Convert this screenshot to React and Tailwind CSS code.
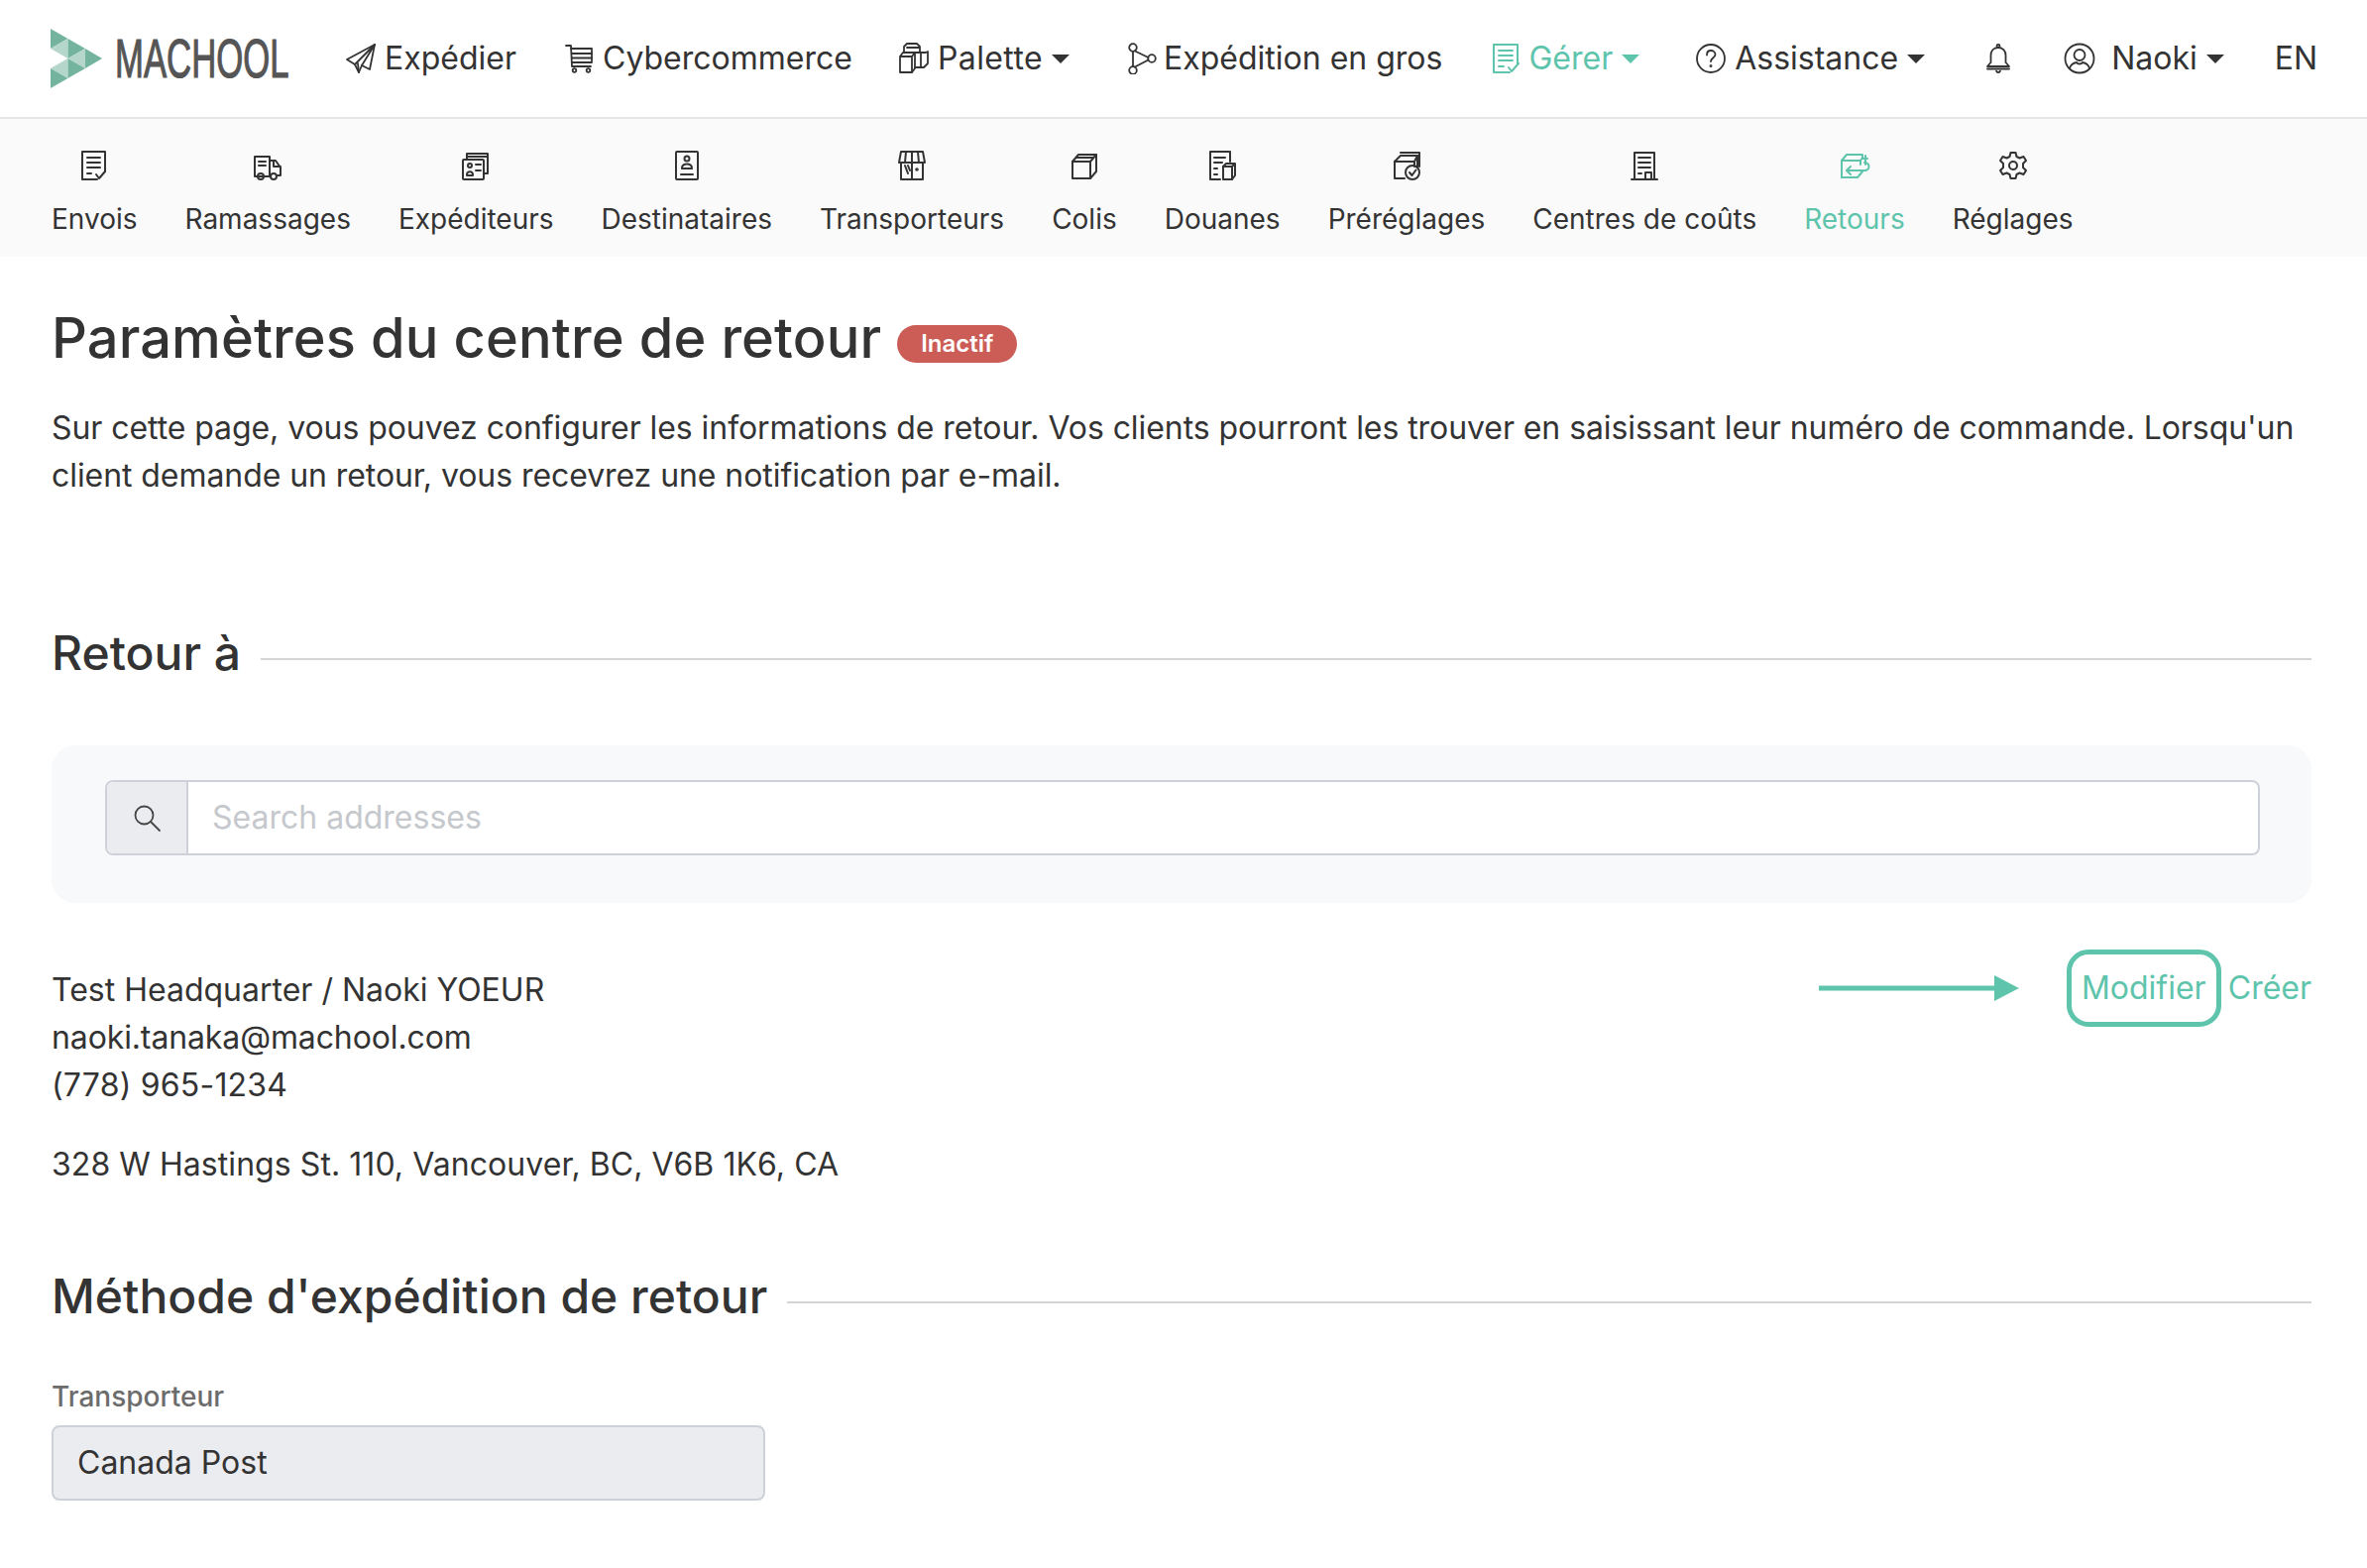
import React from "react";

const Ico = ({ w = 32, h = 32, vb = "0 0 32 32", sw = 2, children, className = "" }) => (
  <svg
    width={w}
    height={h}
    viewBox={vb}
    fill="none"
    stroke="currentColor"
    strokeWidth={sw}
    strokeLinecap="round"
    strokeLinejoin="round"
    className={`shrink-0 ${className}`}
  >
    {children}
  </svg>
);

const Logo = () => (
  <svg width="52" height="60" viewBox="0 0 52 60" className="shrink-0">
    <path d="M0 0L17.5 10L0 20Z" fill="#74b49f" />
    <path d="M0 20L17.5 10V30Z" fill="#b5d6cb" />
    <path d="M17.5 10L35 20L17.5 30Z" fill="#74b49f" />
    <path d="M35 20L17.5 30L35 40Z" fill="#b5d6cb" />
    <path d="M35 20L52 30L35 40Z" fill="#74b49f" />
    <path d="M17.5 30L0 40L17.5 50Z" fill="#b5d6cb" />
    <path d="M17.5 30L35 40L17.5 50Z" fill="#74b49f" />
    <path d="M0 40L17.5 50L0 60Z" fill="#74b49f" />
  </svg>
);

const Plane = () => (
  <Ico sw={1.8}>
    <path d="M30 2L2 17L10 22L14 30L17 23L25 27L30 2Z" />
    <path d="M30 2L10 22M30 2L17 23M14 30L13 21" />
  </Ico>
);
const Cart = () => (
  <Ico sw={1.8}>
    <path d="M2 3H7L8 24H27" />
    <path d="M7 6H28V20H8" />
    <path d="M8 11H28M8 15.5H28" />
    <circle cx="10.5" cy="28" r="1.8" />
    <circle cx="24.5" cy="28" r="1.8" />
  </Ico>
);
const Boxes = () => (
  <Ico sw={1.8}>
    <path d="M2 14H14V30H2ZM2 14L5 10H17L14 14" />
    <path d="M17 10V26L14 30" />
    <path d="M6 10V4L9 1H19L22 4V10M9 5H21" />
    <path d="M17 10H28L30 9V21L26 25H17" />
    <path d="M23 10V25" />
  </Ico>
);
const Graph = () => (
  <Ico sw={1.8}>
    <circle cx="6" cy="5" r="3.8" />
    <circle cx="6" cy="28" r="3.8" />
    <circle cx="25" cy="16" r="3.8" />
    <path d="M8 8.5L21.5 15M8 24.5L21.5 17.5M6 9V24" />
  </Ico>
);
const DocCheck = () => (
  <Ico w={30} h={32} vb="0 0 30 32">
    <path d="M19 30H3V2H27V22" />
    <path d="M8 8H22M8 13H22M8 18H22M8 24H13" />
    <path d="M18 25L21 29L28 21" />
  </Ico>
);
const Help = () => (
  <Ico sw={1.8}>
    <circle cx="16" cy="16" r="14" />
    <path d="M12 12.5C12 9.5 14 8 16 8C18.5 8 20.5 9.7 20.5 12C20.5 15 16 15.5 16 19" />
    <circle cx="16" cy="23.5" r="0.6" />
  </Ico>
);
const Bell = () => (
  <Ico sw={1.8}>
    <path d="M16 5C11 5 8.5 8.5 8.5 13V20L5 24H27L23.5 20V13C23.5 8.5 21 5 16 5Z" />
    <path d="M5 26.5H27" />
    <circle cx="16" cy="3.5" r="1.5" />
    <path d="M14 28.5C14.5 30.5 17.5 30.5 18 28.5" />
  </Ico>
);
const User = () => (
  <Ico sw={1.8}>
    <circle cx="16" cy="16" r="14.5" />
    <circle cx="16" cy="12.5" r="5.5" />
    <path d="M6 26C7 22 10 20.5 13 20C14 22 18 22 19 20C22 20.5 25 22 26 26" />
  </Ico>
);
const Caret = () => (
  <span className="ml-[9px] w-0 h-0 border-l-[9px] border-r-[9px] border-t-[9px] border-l-transparent border-r-transparent border-t-current" />
);

const TopItem = ({ icon, label, caret, active, ml = "", gap = "gap-[8px]", track = "" }) => (
  <div className={`flex items-center whitespace-nowrap ${gap} ${active ? "text-[#5ec4ac]" : "text-[#333]"} ${ml}`}>
    {icon}
    <span className={`flex items-center ${track}`}>
      {label}
      {caret && <Caret />}
    </span>
  </div>
);

const subIcons = {
  envois: (
    <>
      <path d="M19 30H4V2H27V22" />
      <path d="M9 8H22M9 13H22M9 18H22M9 24H13" />
      <path d="M18 25L21 29L27 22" />
    </>
  ),
  ramassages: (
    <>
      <path d="M17 27H3V7H18V27" />
      <path d="M7 12H14M7 16H14" />
      <path d="M18 11H24L29 18V26H26" />
      <path d="M22 11V17H29" />
      <circle cx="9" cy="27" r="3" />
      <circle cx="22" cy="27" r="3" />
    </>
  ),
  expediteurs: (
    <>
      <path d="M7 9V4H28V24H24" />
      <path d="M7 7H28" />
      <rect x="3" y="10" width="21" height="20" rx="1" />
      <circle cx="10" cy="16" r="2" />
      <path d="M7 26C6 21 14 21 13 26Z" />
      <path d="M16 15H21M16 21H21" />
    </>
  ),
  destinataires: (
    <>
      <rect x="5" y="2" width="22" height="28" rx="1" />
      <circle cx="16" cy="9" r="2.5" />
      <path d="M11 19C10 13 22 13 21 19Z" />
      <path d="M10 25H22" />
    </>
  ),
  transporteurs: (
    <>
      <path d="M5 2H27L29 13H3Z" />
      <path d="M10 2L9 13M16 2V13M22 2L23 13" />
      <path d="M5 13V30H27V13" />
      <path d="M16 13V30" />
      <path d="M9 16L12 24M12 16L14 21" />
      <circle cx="21" cy="20" r="0.8" />
    </>
  ),
  colis: (
    <>
      <path d="M4 12H22V29H4Z" />
      <path d="M4 12L10 5H28L22 12" />
      <path d="M28 5V22L22 29" />
      <path d="M8 8H25" />
    </>
  ),
  douanes: (
    <>
      <path d="M14 30H4V2H24V12" />
      <path d="M8 8H19M8 13H16M8 19H11M8 25H11" />
      <path d="M17 17H26V30H17Z" />
      <path d="M17 17L20 14H29L26 17M29 14V26L26 30" />
    </>
  ),
  prereglages: (
    <>
      <path d="M14 29H4V12L10 6H27V18" />
      <path d="M4 12H24V17M24 12L27 6" />
      <path d="M10 3H29V17" />
      <circle cx="22" cy="23" r="7" />
      <path d="M19 23L21.5 26L25.5 20.5" />
    </>
  ),
  centres: (
    <>
      <path d="M6 30V3H26V30" />
      <path d="M3 30H29" />
      <path d="M10 8H22M10 13H22M10 18H22M10 24H13" />
      <path d="M17 30V23H23V30" />
    </>
  ),
  retours: (
    <>
      <path d="M3 28V11L8 5H24V9H29" />
      <path d="M3 11H22V15M22 11L24 8" />
      <path d="M27 6V15" />
      <path d="M26 13C32 13 32 21 26 21H8" />
      <path d="M12 17L8 21L12 25" />
      <path d="M3 28H19L24 22" />
    </>
  ),
  reglages: (
    <>
      <path d="M13.5 3H18.5L19.5 7L22.5 8.5L26.5 7L29 11L26 14V18L29 21L26.5 25L22.5 23.5L19.5 25L18.5 29H13.5L12.5 25L9.5 23.5L5.5 25L3 21L6 18V14L3 11L5.5 7L9.5 8.5L12.5 7Z" />
      <circle cx="16" cy="16" r="4" />
    </>
  ),
};

const subItems = [
  ["envois", "Envois"],
  ["ramassages", "Ramassages"],
  ["expediteurs", "Expéditeurs"],
  ["destinataires", "Destinataires"],
  ["transporteurs", "Transporteurs"],
  ["colis", "Colis"],
  ["douanes", "Douanes"],
  ["prereglages", "Préréglages"],
  ["centres", "Centres de coûts"],
  ["retours", "Retours"],
  ["reglages", "Réglages"],
];

const SectionTitle = ({ children, className = "" }) => (
  <div className={`flex items-center gap-[20px] ${className}`}>
    <h2 className="text-[48px] leading-[58px] font-medium text-[#333] whitespace-nowrap">{children}</h2>
    <div className="flex-1 h-[2px] bg-[#d4d4d4] mt-[11px]" />
  </div>
);

export default function App() {
  return (
    <div className="w-[2388px] h-[1582px] overflow-hidden bg-white text-[#333] font-['Inter',sans-serif]">
      <header className="h-[120px] border-b-2 border-[#e6e6e6] flex items-center pl-[51px] text-[32px]">
        <div className="flex items-center w-[297px] shrink-0">
          <Logo />
          <span className="ml-[13px] w-[175px] text-[56px] leading-none font-['Liberation_Sans',sans-serif] text-[#555] origin-left scale-x-[0.62] whitespace-nowrap [-webkit-text-stroke:1.2px_#555]">
            MACHOOL
          </span>
        </div>
        <TopItem icon={<Plane />} label="Expédier" />
        <TopItem icon={<Cart />} label="Cybercommerce" ml="ml-[48px]" gap="gap-[7px]" />
        <TopItem icon={<Boxes />} label="Palette" caret ml="ml-[46px]" track="tracking-[0.4px]" />
        <TopItem icon={<Graph />} label="Expédition en gros" ml="ml-[58px]" gap="gap-[5px]" />
        <TopItem icon={<DocCheck />} label="Gérer" caret active ml="ml-[49px]" />
        <TopItem icon={<Help />} label="Assistance" caret ml="ml-[56px]" />
        <div className="ml-[58px] text-[#333]"><Bell /></div>
        <TopItem icon={<User />} label="Naoki" caret ml="ml-[50px]" gap="gap-[16px]" />
        <span className="ml-[51px]">EN</span>
      </header>

      <nav className="h-[139px] bg-[#fafafa] flex gap-[48px] pl-[52px] pt-[31px]">
        {subItems.map(([key, label]) => (
          <div
            key={key}
            className={`flex flex-col items-center gap-[16px] text-[28px] leading-[44px] ${key === "retours" ? "text-[#5ec4ac]" : "text-[#333]"}`}
          >
            <Ico>{subIcons[key]}</Ico>
            <span className="whitespace-nowrap">{label}</span>
          </div>
        ))}
      </nav>

      <main className="pl-[52px] pr-[56px]">
        <div className="flex items-center gap-[16px] mt-[48px]">
          <h1 className="text-[56px] leading-[68px] font-medium text-[#333] whitespace-nowrap tracking-[0.1px]">
            Paramètres du centre de retour
          </h1>
          <span className="bg-[#cb5c56] text-white text-[24px] leading-[38px] font-semibold rounded-full px-[24px] mt-[11px]">
            Inactif
          </span>
        </div>
        <p className="mt-[33px] text-[32px] leading-[48px] text-[#333] tracking-[-0.07px]">
          Sur cette page, vous pouvez configurer les informations de retour. Vos clients pourront les trouver en saisissant leur numéro de commande. Lorsqu'un client demande un retour, vous recevrez une notification par e-mail.
        </p>

        <SectionTitle className="mt-[126px]">Retour à</SectionTitle>

        <div className="mt-[64px] h-[159px] bg-[#f8f9fb] rounded-[24px] pl-[54px] pr-[52px] pt-[35px]">
          <div className="flex h-[76px] border-2 border-[#ced1d9] rounded-[8px] bg-white overflow-hidden">
            <div className="w-[82px] bg-[#ebecf0] border-r-2 border-[#ced1d9] flex items-center justify-center text-[#444]">
              <Ico sw={1.8}>
                <circle cx="13.5" cy="13.5" r="9" />
                <path d="M20 20L29 29" />
              </Ico>
            </div>
            <div className="flex items-center pl-[24px] text-[32px] text-[#c5c8cc]">Search addresses</div>
          </div>
        </div>

        <div className="mt-[64px] flex justify-between items-start">
          <div className="text-[32px] leading-[48px] text-[#333]">
            <div>Test Headquarter / Naoki YOEUR</div>
            <div className="tracking-[-0.12px]">naoki.tanaka@machool.com</div>
            <div className="tracking-[0.2px]">(778) 965-1234</div>
            <div className="mt-[32px] tracking-[0.06px]">328 W Hastings St. 110, Vancouver, BC, V6B 1K6, CA</div>
          </div>
          <div className="flex items-center text-[32px] text-[#5ec4ac] -mt-[17px]">
            <svg width="202" height="26" viewBox="0 0 202 26" className="shrink-0">
              <path d="M0 13H180" stroke="#5ec4ac" strokeWidth="5" />
              <path d="M177 0L202 13L177 26Z" fill="#5ec4ac" />
            </svg>
            <div className="ml-[48px] w-[156px] h-[78px] flex items-center justify-center border-[5px] border-[#5ec4ac] rounded-[22px]">
              Modifier
            </div>
            <div className="ml-[7px]">Créer</div>
          </div>
        </div>

        <SectionTitle className="mt-[80px]">Méthode d'expédition de retour</SectionTitle>

        <div className="mt-[52px] text-[28px] leading-[40px] font-medium text-[#6c6c6c]">Transporteur</div>
        <div className="mt-[9px] w-[720px] h-[76px] flex items-center bg-[#ebecf0] border-2 border-[#ced1d9] rounded-[8px] pl-[24px] text-[32px] text-[#333]">
          Canada Post
        </div>
      </main>
    </div>
  );
}
